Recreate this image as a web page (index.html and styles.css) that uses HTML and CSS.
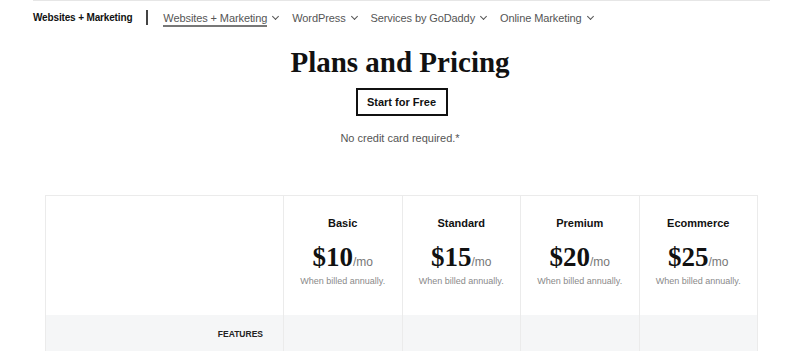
FILE: index.html
```html
<!DOCTYPE html>
<html lang="en">
<head>
    <meta charset="UTF-8">
    <meta name="viewport" content="width=device-width, initial-scale=1.0">
    <title>Plans and Pricing - Websites + Marketing</title>
    <link rel="stylesheet" href="styles.css">
</head>
<body>
    <header class="topbar">
        <span class="brand">Websites + Marketing</span>
        <span class="divider"></span>
        <nav class="menu">
            <a class="menu-item active" href="#">Websites + Marketing</a>
            <span class="chev"></span>
            <a class="menu-item" href="#">WordPress</a>
            <span class="chev"></span>
            <a class="menu-item" href="#">Services by GoDaddy</a>
            <span class="chev"></span>
            <a class="menu-item" href="#">Online Marketing</a>
            <span class="chev"></span>
        </nav>
    </header>

    <section class="hero">
        <h1>Plans and Pricing</h1>
        <button class="start-btn">Start for Free</button>
        <p class="note">No credit card required.*</p>
    </section>

    <div class="plans">
        <div class="cell blank"></div>
        <div class="cell plan">
            <div class="plan-name">Basic</div>
            <div class="price"><span class="amount">$10</span><span class="per">/mo</span></div>
            <div class="billed">When billed annually.</div>
        </div>
        <div class="cell plan">
            <div class="plan-name">Standard</div>
            <div class="price"><span class="amount">$15</span><span class="per">/mo</span></div>
            <div class="billed">When billed annually.</div>
        </div>
        <div class="cell plan">
            <div class="plan-name">Premium</div>
            <div class="price"><span class="amount">$20</span><span class="per">/mo</span></div>
            <div class="billed">When billed annually.</div>
        </div>
        <div class="cell plan">
            <div class="plan-name">Ecommerce</div>
            <div class="price"><span class="amount">$25</span><span class="per">/mo</span></div>
            <div class="billed">When billed annually.</div>
        </div>

        <div class="cell feat-label">FEATURES</div>
        <div class="cell feat"></div>
        <div class="cell feat"></div>
        <div class="cell feat"></div>
        <div class="cell feat"></div>
    </div>
</body>
</html>
```

FILE: styles.css
```css
body {
    font-family: "Liberation Sans", Arial, sans-serif;
    margin: 0;
    padding: 0;
    background-color: #ffffff;
    color: #111111;
}

.topbar {
    display: flex;
    align-items: center;
    height: 33px;
    margin: 0 30px 0 33px;
    border-top: 1px solid #e6e6e6;
}

.brand {
    font-size: 10px;
    font-weight: bold;
    letter-spacing: -0.15px;
    color: #111111;
}

.divider {
    width: 2px;
    height: 15px;
    background-color: #444444;
    margin: 0 15px 0 14px;
}

.menu {
    display: flex;
    align-items: center;
}

.menu-item {
    font-size: 11px;
    letter-spacing: -0.1px;
    color: #555555;
    text-decoration: none;
}

.menu-item.active {
    padding-bottom: 1px;
    border-bottom: 2px solid #777777;
    margin-top: 3px;
}

/* small chevron next to each menu item */
.chev {
    width: 4px;
    height: 4px;
    border-right: 1.3px solid #555555;
    border-bottom: 1.3px solid #555555;
    transform: rotate(45deg);
    margin: -3px 14px 0 6px;
}

.hero {
    text-align: center;
}

h1 {
    font-family: "Liberation Serif", "Times New Roman", serif;
    font-size: 29px;
    font-weight: bold;
    margin: 12px 0 9px;
    color: #111111;
}

.start-btn {
    font-family: "Liberation Sans", Arial, sans-serif;
    font-size: 11px;
    font-weight: bold;
    color: #111111;
    background: #ffffff;
    border: 2px solid #111111;
    width: 92px;
    height: 28px;
    padding: 0;
    margin-left: 3px;
    cursor: pointer;
}

.note {
    font-size: 11px;
    color: #555555;
    margin: 16px 0 0;
}

.plans {
    display: grid;
    grid-template-columns: 237px repeat(4, 1fr);
    margin: 51px 0 0 45px;
    width: 713px;
    box-sizing: border-box;
    border-top: 1px solid #ebebeb;
    border-left: 1px solid #ebebeb;
    border-right: 1px solid #ebebeb;
}

.cell {
    border-left: 1px solid #ebebeb;
}

.cell.blank,
.cell.feat-label {
    border-left: none;
}

.plan {
    height: 119px;
    text-align: center;
    padding-top: 21px;
    box-sizing: border-box;
}

.plan-name {
    font-size: 11px;
    font-weight: bold;
    color: #111111;
}

.price {
    margin-top: 13px;
}

.amount {
    font-family: "Liberation Serif", "Times New Roman", serif;
    font-size: 27px;
    font-weight: bold;
    color: #111111;
}

.per {
    font-size: 12px;
    color: #777777;
}

.billed {
    font-size: 9px;
    color: #8a8a8a;
    margin-top: 3px;
}

.feat-label,
.feat {
    background-color: #f5f6f7;
    height: 40px;
}

.feat-label {
    font-size: 8.5px;
    font-weight: bold;
    color: #222222;
    text-align: right;
    padding: 14px 20px 0 0;
    box-sizing: border-box;
}
```
